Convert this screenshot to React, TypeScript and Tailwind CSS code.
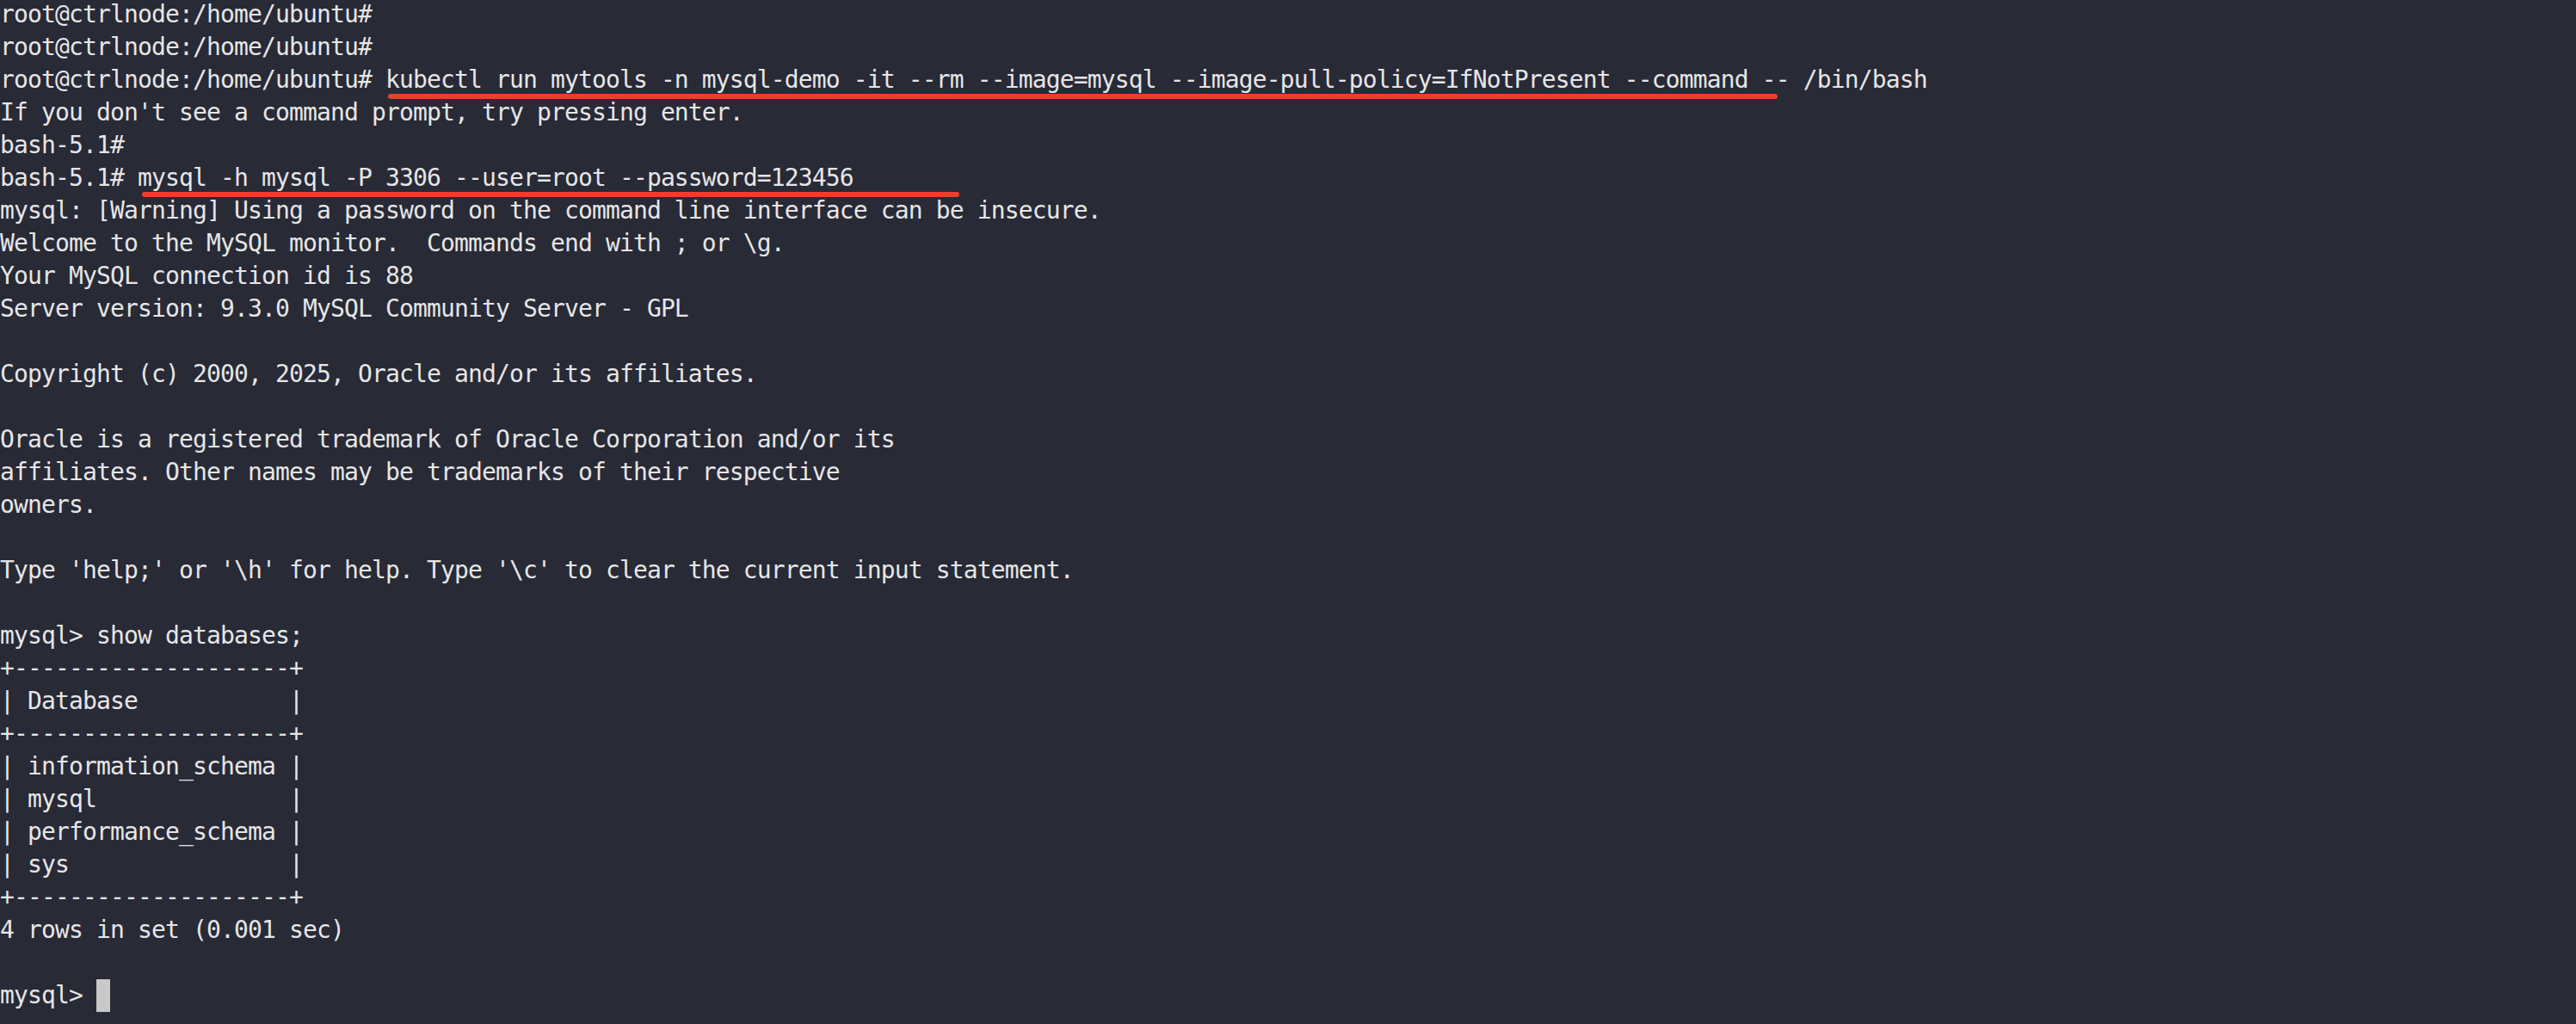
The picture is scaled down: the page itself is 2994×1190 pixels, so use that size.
import React from "react";

type Mark = { left: number; width: number };

const lines: { text: string; mark?: Mark }[] = [
  { text: "root@ctrlnode:/home/ubuntu#" },
  { text: "root@ctrlnode:/home/ubuntu#" },
  {
    text: "root@ctrlnode:/home/ubuntu# kubectl run mytools -n mysql-demo -it --rm --image=mysql --image-pull-policy=IfNotPresent --command -- /bin/bash",
    mark: { left: 451, width: 1615 },
  },
  { text: "If you don't see a command prompt, try pressing enter." },
  { text: "bash-5.1#" },
  {
    text: "bash-5.1# mysql -h mysql -P 3306 --user=root --password=123456",
    mark: { left: 165, width: 950 },
  },
  { text: "mysql: [Warning] Using a password on the command line interface can be insecure." },
  { text: "Welcome to the MySQL monitor.  Commands end with ; or \\g." },
  { text: "Your MySQL connection id is 88" },
  { text: "Server version: 9.3.0 MySQL Community Server - GPL" },
  { text: "" },
  { text: "Copyright (c) 2000, 2025, Oracle and/or its affiliates." },
  { text: "" },
  { text: "Oracle is a registered trademark of Oracle Corporation and/or its" },
  { text: "affiliates. Other names may be trademarks of their respective" },
  { text: "owners." },
  { text: "" },
  { text: "Type 'help;' or '\\h' for help. Type '\\c' to clear the current input statement." },
  { text: "" },
  { text: "mysql> show databases;" },
  { text: "+--------------------+" },
  { text: "| Database           |" },
  { text: "+--------------------+" },
  { text: "| information_schema |" },
  { text: "| mysql              |" },
  { text: "| performance_schema |" },
  { text: "| sys                |" },
  { text: "+--------------------+" },
  { text: "4 rows in set (0.001 sec)" },
  { text: "" },
];

export default function App() {
  return (
    <div className="w-[2994px] h-[1190px] overflow-hidden bg-[#282a36] text-[#e6e6e6]">
      <div className="-mt-[2px] font-['DejaVu_Sans_Mono',monospace] text-[28px] leading-[38px] tracking-[-0.86px]">
        {lines.map((l, i) => (
          <div key={i} className="relative h-[38px] whitespace-pre">
            {l.text}
            {l.mark && (
              <span
                className="absolute top-[35px] h-[6px] rounded-full bg-[#e8412a]"
                style={{ left: l.mark.left, width: l.mark.width }}
              />
            )}
          </div>
        ))}
        <div className="flex h-[38px] items-center whitespace-pre">
          <span>mysql&gt; </span>
          <span className="h-[38px] w-[16px] bg-[#c8c8c8]" />
        </div>
      </div>
    </div>
  );
}
